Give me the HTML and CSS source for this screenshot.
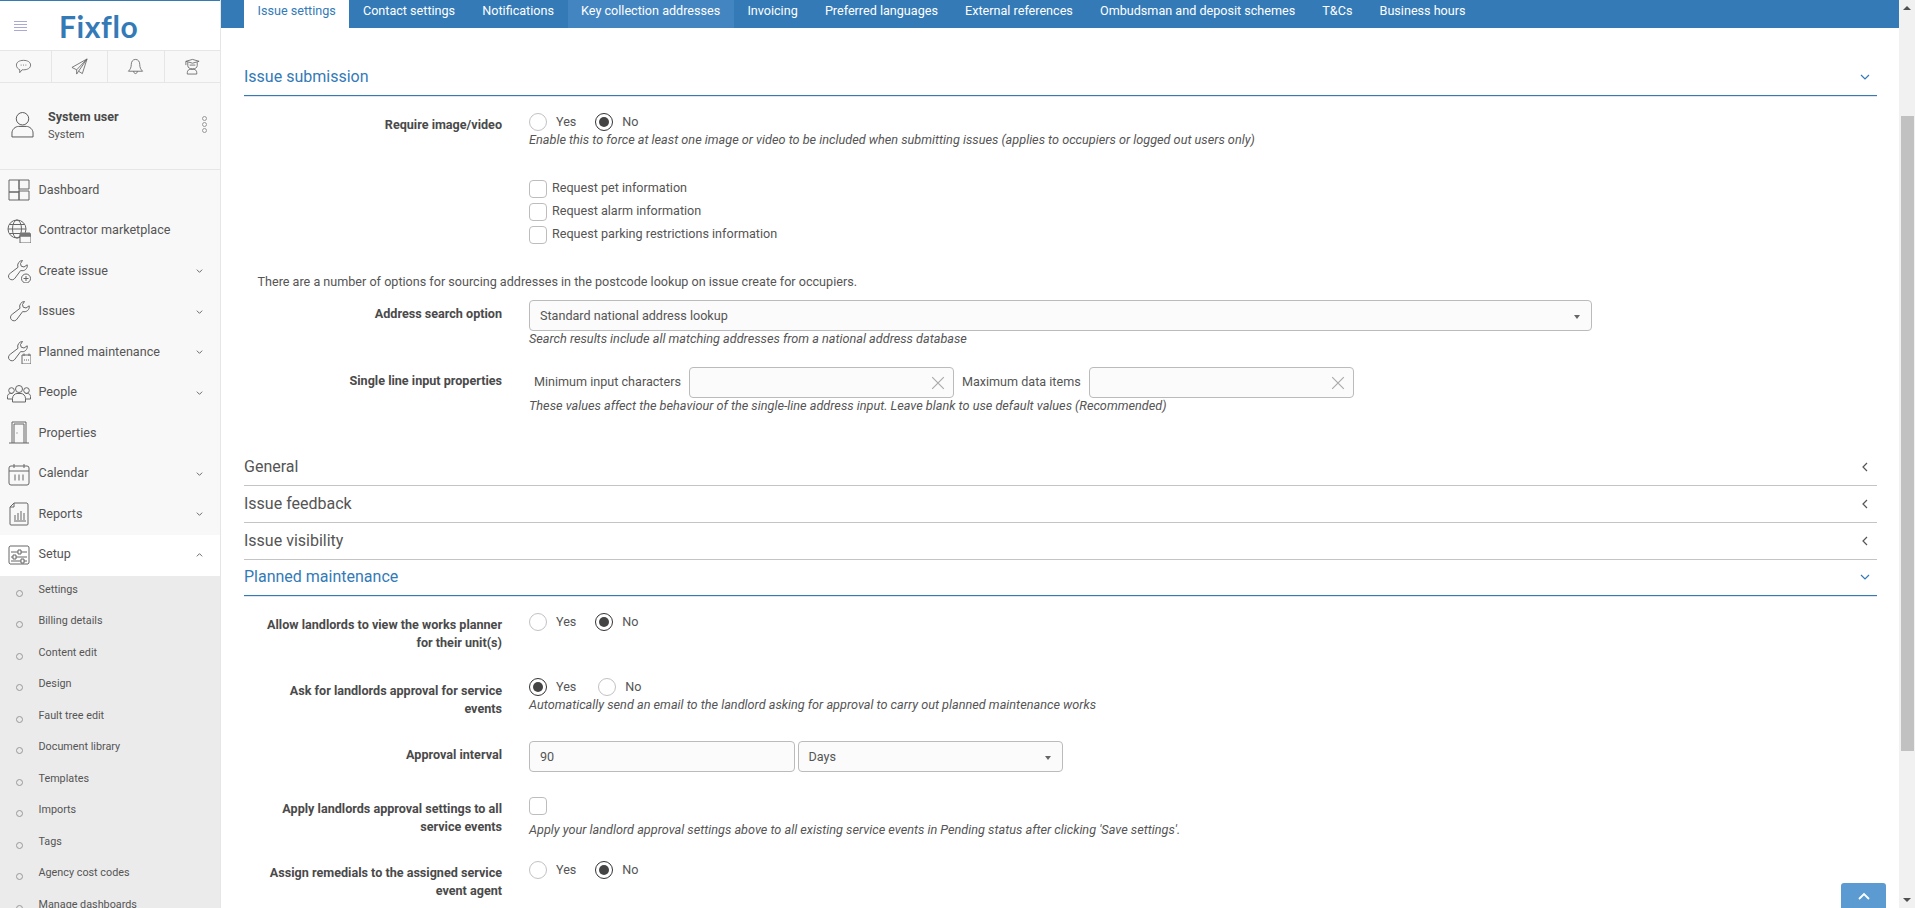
FILE: index.html
```html
<!DOCTYPE html>
<html lang="en">
<head>
<meta charset="utf-8">
<title>Fixflo settings</title>
<link rel="stylesheet" href="styles.css">
</head>
<body>
<aside class="sidebar">
  <header class="brand">
    <div class="burger"><i></i><i></i><i></i><i></i></div>
    <div class="logo">Fixflo</div>
  </header>
  <div class="quick">
    <div class="quick-cell"><svg class="qi" viewBox="0 0 18 18"><path d="M9 2.500c4.400 0 7.500 1.900 7.500 5s-3.100 5-7.500 5H7.500L5 15.500v-3.200C2.900 11.500 1.500 9.800 1.500 7.500c0-3.100 3.100-5 7.500-5z"/><path d="M6 7.500h1M8.500 7.500h1M11 7.500h1"/></svg></div>
    <div class="quick-cell"><svg class="qi" viewBox="0 0 18 18"><path d="M17 1 1 10l5 2.500L17 1 8 14l4 2.500L17 1zM6 12.500V17l2-3"/></svg></div>
    <div class="quick-cell"><svg class="qi" viewBox="0 0 18 18"><path d="M9 1.500c-3 0-4.500 2.500-4.500 5.500 0 3-1 5-3 7h15c-2-2-3-4-3-7 0-3-1.500-5.500-4.500-5.500zM7 14c0 1.300.9 2.500 2 2.500s2-1.200 2-2.500"/></svg></div>
    <div class="quick-cell"><svg class="qi" viewBox="0 0 18 18"><path d="M2 3.500 9 1.500l7 2-7 2zM4 4.500v3.500c0 2.500 2.200 3.500 5 3.500s5-1 5-3.500V4.500M2 3.500v4M3.500 17v-1.500c0-2.200 1.500-3.500 3-3.500h4c1.500 0 3 1.300 3 3.500V17zM6 7.500h6"/></svg></div>
  </div>
  <div class="user">
    <svg class="avatar" viewBox="0 0 24 28"><circle cx="12" cy="8" r="6.500"/><path d="M1 27v-4c0-4 3.500-7 7-7h8c3.500 0 7 3 7 7v4z"/></svg>
    <div class="user-text"><div class="user-name">System user</div><div class="user-role">System</div></div>
    <div class="dots"><i></i><i></i><i></i></div>
  </div>
  <nav class="nav">
    <a class="nav-item"><svg class="ni" viewBox="0 0 24 24"><path d="M2 2h10v12H2zM12 2h10v9H12zM2 14h10v8H2zM12 13h10v9H12z"/></svg><span>Dashboard</span></a>
    <a class="nav-item"><svg class="ni" viewBox="0 0 24 24"><circle cx="10" cy="10" r="9"/><ellipse cx="10" cy="10" rx="4.500" ry="9"/><path d="M1 10h18M2.500 5.500h15M2.500 14.500h15"/><path class="fill" d="M13 17h11v7H13z"/><path class="solid" d="M13 14h10l1 3H13z"/></svg><span>Contractor marketplace</span></a>
    <a class="nav-item"><svg class="ni" viewBox="0 0 24 24"><path d="M15.500 1.500a5 5 0 0 0-4.500 6.800l-7.800 6a3.500 3.500 0 1 0 4.800 4.800l5.700-7.600a5 5 0 0 0 6.500-5.700L17 8l-2.800-.8L13.500 4.500z"/><circle cx="19" cy="19.500" r="4.500"/><path d="M19 17v5M16.500 19.500h5"/></svg><span>Create issue</span><svg class="chev" viewBox="0 0 10 6"><path d="M1 1l4 4 4-4"/></svg></a>
    <a class="nav-item"><svg class="ni" viewBox="0 0 24 24"><path d="M17.500 1.500a5 5 0 0 0-4.500 6.800l-7.800 6a3.500 3.500 0 1 0 4.800 4.800l5.700-7.600a5 5 0 0 0 6.500-5.700L19 8l-2.800-.8L15.500 4.500z"/></svg><span>Issues</span><svg class="chev" viewBox="0 0 10 6"><path d="M1 1l4 4 4-4"/></svg></a>
    <a class="nav-item"><svg class="ni" viewBox="0 0 24 24"><path d="M15.500 1.500a5 5 0 0 0-4.500 6.800l-7.800 6a3.500 3.500 0 1 0 4.800 4.800l5.700-7.600a5 5 0 0 0 6.500-5.700L17 8l-2.800-.8L13.500 4.500z"/><path class="fill" d="M15 15h9v9h-9z"/><path d="M17 13.500v2.500M22 13.500v2.500M17 20h1M19 20h1M21 20h1"/></svg><span>Planned maintenance</span><svg class="chev" viewBox="0 0 10 6"><path d="M1 1l4 4 4-4"/></svg></a>
    <a class="nav-item"><svg class="ni" viewBox="0 0 24 24"><circle cx="12" cy="8" r="3.500"/><circle cx="4.500" cy="9.500" r="2.800"/><circle cx="19.500" cy="9.500" r="2.800"/><path d="M5.500 21v-3.500c0-3 2.500-5 4.500-5h4c2 0 4.500 2 4.500 5V21zM5.500 18H.5v-2.500c0-2 1.500-3 3-3h2M18.500 18h5v-2.500c0-2-1.500-3-3-3h-2"/></svg><span>People</span><svg class="chev" viewBox="0 0 10 6"><path d="M1 1l4 4 4-4"/></svg></a>
    <a class="nav-item"><svg class="ni" viewBox="0 0 24 24"><path d="M5 22V1h14v21M7 22V3h10v19M2 22h20M9.500 12h1"/></svg><span>Properties</span></a>
    <a class="nav-item"><svg class="ni" viewBox="0 0 24 24"><path d="M4 4h16a2 2 0 0 1 2 2v15a2 2 0 0 1-2 2H4a2 2 0 0 1-2-2V6a2 2 0 0 1 2-2zM2 9h20M7 2v4M17 2v4M8 12.500v6M12 12.500v6M16 12.500v6"/></svg><span>Calendar</span><svg class="chev" viewBox="0 0 10 6"><path d="M1 1l4 4 4-4"/></svg></a>
    <a class="nav-item"><svg class="ni" viewBox="0 0 24 24"><path d="M7 1h13a2 2 0 0 1 1 2v19a1 1 0 0 1-1 1H4a1 1 0 0 1-1-1V5zM7 1v4H3"/><path d="M7 19h12M8 18v-5M11 18v-7M14 18V9M17 18v-7"/></svg><span>Reports</span><svg class="chev" viewBox="0 0 10 6"><path d="M1 1l4 4 4-4"/></svg></a>
    <a class="nav-item nav-open"><svg class="ni" viewBox="0 0 24 24"><path d="M3 3h18a2 2 0 0 1 1 2v14a2 2 0 0 1-1 2H3a2 2 0 0 1-1-2V5a2 2 0 0 1 1-2zM4 9h7M14 9h6M4 14h2M9 14h11M4 18h10M17 18h3"/><path d="M11 7h3v4h-3zM6 12h3v4H6zM14 16h3v4h-3z"/></svg><span>Setup</span><svg class="chev" viewBox="0 0 10 6"><path d="M1 5l4-4 4 4"/></svg></a>
  </nav>
  <ul class="subnav">
    <li>Settings</li>
    <li>Billing details</li>
    <li>Content edit</li>
    <li>Design</li>
    <li>Fault tree edit</li>
    <li>Document library</li>
    <li>Templates</li>
    <li>Imports</li>
    <li>Tags</li>
    <li>Agency cost codes</li>
    <li>Manage dashboards</li>
  </ul>
</aside>

<main class="main">
  <div class="tabs">
    <a class="tab tab-active">Issue settings</a>
    <a class="tab">Contact settings</a>
    <a class="tab">Notifications</a>
    <a class="tab tab-hover">Key collection addresses</a>
    <a class="tab">Invoicing</a>
    <a class="tab">Preferred languages</a>
    <a class="tab">External references</a>
    <a class="tab">Ombudsman and deposit schemes</a>
    <a class="tab">T&amp;Cs</a>
    <a class="tab">Business hours</a>
  </div>

  <div class="content">
    <div class="head head-open"><span>Issue submission</span><svg class="head-chev" viewBox="0 0 10 6"><path d="M1 1l4 4 4-4"/></svg></div>
    <div class="body body-first">
      <div class="row">
        <div class="label">Require image/video</div>
        <div class="ctrl">
          <div class="radios">
            <span class="radio"></span><span class="opt">Yes</span>
            <span class="radio on"></span><span class="opt">No</span>
          </div>
          <div class="help">Enable this to force at least one image or video to be included when submitting issues (applies to occupiers or logged out users only)</div>
        </div>
      </div>
      <div class="row row-checks">
        <div class="label"></div>
        <div class="ctrl checks">
          <div class="check-line"><span class="check"></span><span class="check-text">Request pet information</span></div>
          <div class="check-line"><span class="check"></span><span class="check-text">Request alarm information</span></div>
          <div class="check-line"><span class="check"></span><span class="check-text">Request parking restrictions information</span></div>
        </div>
      </div>
      <p class="info">There are a number of options for sourcing addresses in the postcode lookup on issue create for occupiers.</p>
      <div class="row row-address">
        <div class="label label-input">Address search option</div>
        <div class="ctrl">
          <div class="field select select-wide">Standard national address lookup<i class="caret"></i></div>
          <div class="help help-tight">Search results include all matching addresses from a national address database</div>
        </div>
      </div>
      <div class="row row-single">
        <div class="label label-input">Single line input properties</div>
        <div class="ctrl">
          <div class="inline">
            <span class="inline-label">Minimum input characters</span>
            <div class="field field-clear"><svg class="clear" viewBox="0 0 12 12"><path d="M1 1l10 10M11 1 1 11"/></svg></div>
            <span class="inline-label inline-second">Maximum data items</span>
            <div class="field field-clear"><svg class="clear" viewBox="0 0 12 12"><path d="M1 1l10 10M11 1 1 11"/></svg></div>
          </div>
          <div class="help help-tight">These values affect the behaviour of the single-line address input. Leave blank to use default values (Recommended)</div>
        </div>
      </div>
    </div>

    <div class="head"><span>General</span><svg class="head-chev-left" viewBox="0 0 6 10"><path d="M5 1 1 5l4 4"/></svg></div>
    <div class="head"><span>Issue feedback</span><svg class="head-chev-left" viewBox="0 0 6 10"><path d="M5 1 1 5l4 4"/></svg></div>
    <div class="head"><span>Issue visibility</span><svg class="head-chev-left" viewBox="0 0 6 10"><path d="M5 1 1 5l4 4"/></svg></div>
    <div class="head head-open"><span>Planned maintenance</span><svg class="head-chev" viewBox="0 0 10 6"><path d="M1 1l4 4 4-4"/></svg></div>

    <div class="body body-second">
      <div class="row">
        <div class="label">Allow landlords to view the works planner for their unit(s)</div>
        <div class="ctrl">
          <div class="radios">
            <span class="radio"></span><span class="opt">Yes</span>
            <span class="radio on"></span><span class="opt">No</span>
          </div>
        </div>
      </div>
      <div class="row row-ask">
        <div class="label">Ask for landlords approval for service events</div>
        <div class="ctrl">
          <div class="radios radios-wide">
            <span class="radio on"></span><span class="opt">Yes</span>
            <span class="radio"></span><span class="opt">No</span>
          </div>
          <div class="help">Automatically send an email to the landlord asking for approval to carry out planned maintenance works</div>
        </div>
      </div>
      <div class="row row-interval">
        <div class="label label-input">Approval interval</div>
        <div class="ctrl pair">
          <div class="field field-half">90</div>
          <div class="field select field-half">Days<i class="caret"></i></div>
        </div>
      </div>
      <div class="row row-apply">
        <div class="label">Apply landlords approval settings to all service events</div>
        <div class="ctrl">
          <span class="check check-solo"></span>
          <div class="help help-apply">Apply your landlord approval settings above to all existing service events in Pending status after clicking 'Save settings'.</div>
        </div>
      </div>
      <div class="row row-assign">
        <div class="label">Assign remedials to the assigned service event agent</div>
        <div class="ctrl">
          <div class="radios">
            <span class="radio"></span><span class="opt">Yes</span>
            <span class="radio on"></span><span class="opt">No</span>
          </div>
        </div>
      </div>
    </div>
  </div>

  <button class="to-top" type="button" aria-label="Back to top"><svg viewBox="0 0 12 8"><path d="M1 7l5-5 5 5"/></svg></button>
</main>

<div class="scrollbar">
  <i class="arrow-up"></i>
  <div class="thumb"></div>
  <i class="arrow-down"></i>
</div>
</body>
</html>
```
FILE: styles.css
```css
* { box-sizing: border-box; }
html, body { height: 100%; margin: 0; overflow: hidden; }
body {
  display: flex;
  width: 1915px;
  height: 908px;
  font-family: Roboto, "Liberation Sans", sans-serif;
  font-size: 12.6px;
  line-height: 18px;
  color: #555;
  background: #fff;
}

/* Sidebar */
.sidebar {
  flex: 0 0 221px;
  height: 908px;
  overflow: hidden;
  background: #f8f8f8;
  border-right: 1px solid #e6e6e6;
}
.brand {
  display: flex;
  align-items: center;
  height: 51px;
  background: #fff;
  border-top: 1px solid #337ab7;
  border-bottom: 1px solid #e6e6e6;
  padding-left: 14px;
}
.burger { display: flex; flex-direction: column; gap: 2px; width: 13px; margin-top: 1px; }
.burger i { display: block; height: 1px; background: #a9a9d6; }
.logo {
  margin-left: 32px;
  font-family: Lato, Roboto, sans-serif;
  font-size: 30px;
  line-height: 36px;
  font-weight: 700;
  letter-spacing: 0.6px;
  color: #337ab7;
}
.quick {
  display: flex;
  height: 32px;
  border-bottom: 1px solid #e6e6e6;
}
.quick-cell {
  flex: 1 1 0;
  display: flex;
  align-items: center;
  justify-content: center;
  border-right: 1px solid #e6e6e6;
}
.quick-cell:first-child { flex: 0 0 52px; padding-right: 4px; }
.quick-cell:last-child { border-right: 0; }
.qi { width: 17px; height: 17px; fill: none; stroke: #666; stroke-width: 0.9; }

.user {
  display: flex;
  align-items: center;
  height: 87px;
  border-bottom: 1px solid #e6e6e6;
  padding: 0 0 4px 11px;
}
.avatar { width: 23px; height: 27px; fill: none; stroke: #555; stroke-width: 1; flex: none; }
.user-text { margin-left: 14px; flex: 1; padding-top: 2px; }
.user-name { font-weight: 700; font-size: 12.6px; line-height: 18px; color: #4a4a4a; }
.user-role { font-size: 11px; line-height: 14px; margin-top: 2px; }
.dots { display: flex; flex-direction: column; gap: 1px; margin-right: 13px; }
.dots i { display: block; width: 5px; height: 5px; border: 1px solid #999; border-radius: 50%; }

.nav-item {
  display: flex;
  align-items: center;
  height: 40.5px;
  padding-left: 7px;
  font-size: 12.6px;
}
.nav-item span { margin-left: 7.5px; flex: 1; white-space: nowrap; padding-bottom: 1.5px; }
.nav-open { background: #fff; height: 41px; }
.ni { width: 24px; height: 24px; flex: none; fill: none; stroke: #666; stroke-width: 1; }
.ni .fill { fill: #f8f8f8; }
.ni .solid { fill: #777; stroke: #777; }
.chev { width: 7px; height: 4px; margin-right: 17px; fill: none; stroke: #555; stroke-width: 1.300; }

.subnav {
  list-style: none;
  margin: 0;
  padding: 0;
  background: #ebebeb;
  height: 335px;
}
.subnav li {
  position: relative;
  height: 31.5px;
  line-height: 28px;
  padding-left: 38.5px;
  font-size: 10.8px;
  color: #555;
}
.subnav li::before {
  content: "";
  position: absolute;
  left: 16px;
  top: 14px;
  width: 5px;
  height: 5px;
  border: 1px solid #999;
  border-radius: 50%;
}

/* Main */
.main {
  position: relative;
  flex: 1 1 auto;
  min-width: 0;
  height: 908px;
  overflow: hidden;
  background: #fff;
}
.tabs {
  display: flex;
  height: 28px;
  padding-left: 23px;
  background: #337ab7;
}
.tab {
  padding: 0 13.6px;
  line-height: 21px;
  height: 28px;
  font-size: 12.6px;
  color: #fff;
  white-space: nowrap;
}
.tab-active { background: #fff; color: #337ab7; }
.tab-hover { background: #4285c1; }

.content { padding: 31px 22px 0 23px; }
.head {
  display: flex;
  align-items: center;
  justify-content: space-between;
  height: 36.67px;
  padding-right: 7px;
  font-size: 16px;
  color: #555;
  border-bottom: 1px solid #c4c4c4;
}
.head-open { color: #337ab7; border-bottom: 1px solid #337ab7; box-shadow: 0 1px 0 #dfe6ee; }
.head-chev { width: 10px; height: 6px; fill: none; stroke: #337ab7; stroke-width: 1.200; }
.head-chev-left { width: 6px; height: 10px; margin-right: 2px; fill: none; stroke: #555; stroke-width: 1.200; }

.body { padding: 17px 0 0; }
.body-first { padding-bottom: 37px; }
.body-second { padding-top: 16.5px; }
.row {
  display: grid;
  grid-template-columns: 258px 1fr;
  column-gap: 27px;
}
.label {
  text-align: right;
  font-size: 12.6px;
  font-weight: 700;
  line-height: 18px;
  color: #4a4a4a;
  padding-top: 3.5px;
  padding-left: 18px;
}
.label-input { padding-top: 5px; }
.radios { display: flex; align-items: center; height: 18px; }
.radio {
  width: 18px;
  height: 18px;
  border: 1px solid #c2c2c2;
  border-radius: 50%;
  background: #fff;
  flex: none;
  position: relative;
}
.radio.on { border-color: #333; }
.radio.on::after {
  content: "";
  position: absolute;
  inset: 3px;
  background: #444;
  border-radius: 50%;
}
.opt { margin-left: 9px; margin-right: 19px; font-size: 12.6px; }
.radios-wide .opt:nth-of-type(2) { margin-right: 22px; }
.help { font-style: italic; font-size: 12.7px; line-height: 18px; white-space: nowrap; }
.help-tight { line-height: 15px; }
.row-checks { margin-top: 31px; }
.checks { display: flex; flex-direction: column; gap: 5px; }
.check-line { display: flex; align-items: center; gap: 5px; height: 18px; }
.check-text { padding-bottom: 2px; }
.check {
  display: block;
  width: 18px;
  height: 18px;
  border: 1px solid #bdbdbd;
  border-radius: 4px;
  background: #fff;
  flex: none;
}
.info { margin: 29px 0 9px 13.500px; line-height: 18px; }
.field {
  position: relative;
  height: 31px;
  line-height: 30px;
  padding: 0 10px;
  border: 1px solid #bbb;
  border-radius: 4px;
  background: #fbfbfb;
}
.select-wide { width: 1063px; }
.caret {
  position: absolute;
  right: 11px;
  top: 14px;
  width: 0;
  height: 0;
  border-left: 3.500px solid transparent;
  border-right: 3.500px solid transparent;
  border-top: 4px solid #666;
}
.row-single { margin-top: 21px; }
.inline { display: flex; align-items: center; }
.inline-label { margin-left: 5px; margin-right: 8px; white-space: nowrap; }
.inline-second { margin-left: 8px; }
.field-clear { width: 265px; }
.clear { position: absolute; right: 8px; top: 8px; width: 14px; height: 14px; fill: none; stroke: #aaa; stroke-width: 1; }
.row-ask { margin-top: 26px; }
.row-interval { margin-top: 23px; }
.row-apply { margin-top: 25px; }
.row-assign { margin-top: 22px; }
.pair { display: flex; gap: 3px; }
.field-half { width: 265.500px; }
.check-solo { margin-bottom: 6px; }
.help-apply { line-height: 18px; }

.to-top {
  position: absolute;
  right: 13px;
  bottom: 0;
  width: 45px;
  height: 25px;
  padding: 0;
  border: 0;
  border-radius: 3px 3px 0 0;
  background: #5b9bd1;
}
.to-top svg { width: 12px; height: 8px; fill: none; stroke: #fff; stroke-width: 1.800; display: block; margin: 0 auto; }

/* Scrollbar */
.scrollbar {
  flex: 0 0 16px;
  height: 908px;
  display: flex;
  flex-direction: column;
  align-items: center;
  background: #f1f1f1;
}
.arrow-up {
  width: 0; height: 0; margin-top: 6px; flex: none;
  border-left: 4px solid transparent;
  border-right: 4px solid transparent;
  border-bottom: 4px solid #505050;
}
.thumb { width: 13px; height: 635px; margin-top: 106px; background: #c1c1c1; }
.arrow-down {
  width: 0; height: 0; margin-top: auto; margin-bottom: 6px; flex: none;
  border-left: 4px solid transparent;
  border-right: 4px solid transparent;
  border-top: 4px solid #505050;
}
```
